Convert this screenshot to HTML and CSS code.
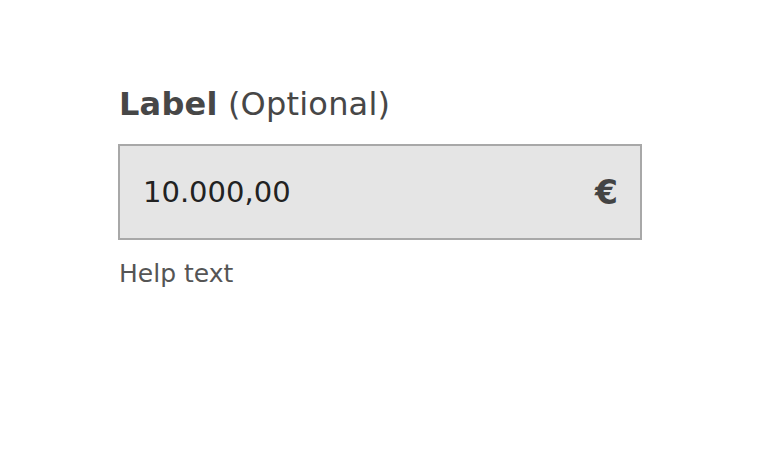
FILE: index.html
```html
<!DOCTYPE html>
<html lang="en">
<head>
<meta charset="utf-8">
<title>Field</title>
<link rel="stylesheet" href="styles.css">
</head>
<body>
<div class="page">
  <div class="field">
    <label class="label" for="amount"><span class="label-main">Label</span> (Optional)</label>
    <div class="input">
      <span class="value" id="amount">10.000,00</span>
      <span class="unit">€</span>
    </div>
    <div class="help">Help text</div>
  </div>
</div>
</body>
</html>
```
FILE: styles.css
```css
html, body {
  margin: 0;
  padding: 0;
  background: #ffffff;
}
body {
  font-family: "DejaVu Sans", "Liberation Sans", sans-serif;
  width: 762px;
  height: 464px;
  overflow: hidden;
}
.page {
  padding: 84px 0 0 118px;
}
.field {
  width: 524px;
  display: flex;
  flex-direction: column;
}
.label {
  font-size: 32px;
  line-height: 40px;
  color: #474747;
  padding-left: 1px;
  letter-spacing: 0.2px;
}
.label-main {
  font-weight: bold;
}
.input {
  margin-top: 20px;
  height: 96px;
  box-sizing: border-box;
  border: 2px solid #a8a8a8;
  background: #e5e5e5;
  display: flex;
  align-items: center;
  justify-content: space-between;
  padding: 0 22px 0 23px;
}
.value {
  font-size: 29px;
  color: #222222;
}
.unit {
  font-size: 33px;
  font-weight: bold;
  color: #444444;
}
.help {
  margin-top: 19px;
  font-size: 25px;
  line-height: 30px;
  color: #555555;
  padding-left: 1px;
}
```
